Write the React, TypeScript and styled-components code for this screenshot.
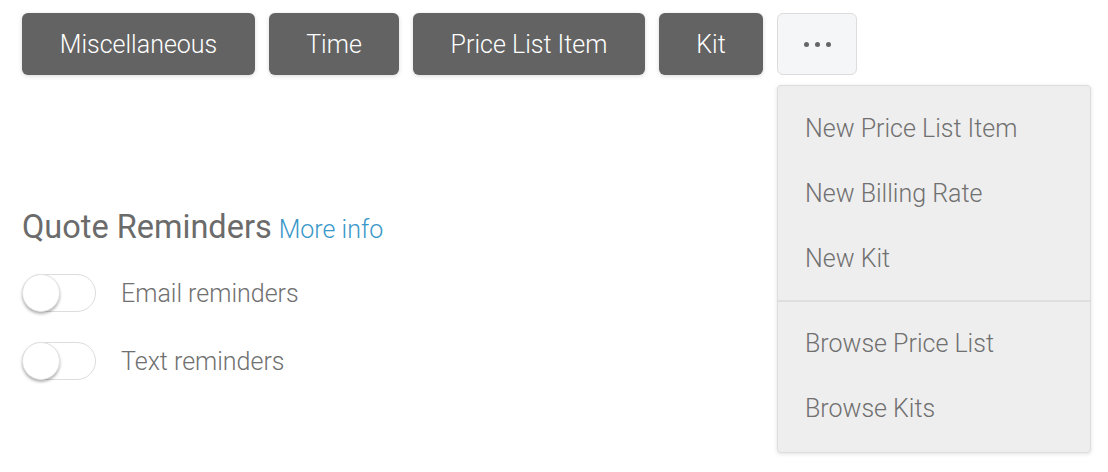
import React from "react";
import styled, { createGlobalStyle } from "styled-components";

const GlobalStyle = createGlobalStyle`
  body {
    margin: 0;
    background: #ffffff;
    font-family: Roboto, "Liberation Sans", sans-serif;
  }
`;

const Page = styled.div`
  padding: 13px 22px;
  width: 1108px;
  height: 472px;
  box-sizing: border-box;
`;

const Toolbar = styled.div`
  display: flex;
  gap: 14px;
  align-items: flex-start;
`;

const ActionButton = styled.button<{ $width: number }>`
  width: ${({ $width }) => $width}px;
  height: 62px;
  border: none;
  border-radius: 6px;
  background: #636363;
  color: #ffffff;
  font-family: Roboto, "Liberation Sans", sans-serif;
  font-size: 25px;
  font-weight: 300;
  box-shadow: 0 1px 4px rgba(0, 0, 0, 0.15);
  cursor: pointer;
`;

const MoreWrap = styled.div`
  position: relative;
`;

const MoreButton = styled.button`
  width: 80px;
  height: 62px;
  border: 1px solid #dcdcdc;
  border-radius: 6px;
  background: #f5f6f8;
  display: flex;
  align-items: center;
  justify-content: center;
  gap: 6px;
  cursor: pointer;
`;

const Dot = styled.span`
  width: 5px;
  height: 5px;
  border-radius: 50%;
  background: #666666;
`;

const Menu = styled.ul`
  position: absolute;
  top: 72px;
  left: 0;
  width: 314px;
  margin: 0;
  padding: 10px 0 11px;
  list-style: none;
  background: #eeeeee;
  border: 1px solid #dddddd;
  border-radius: 4px;
  box-shadow: 0 1px 4px rgba(0, 0, 0, 0.12);
  box-sizing: border-box;
`;

const MenuItem = styled.li`
  height: 65px;
  display: flex;
  align-items: center;
  padding-left: 27px;
  font-size: 25px;
  font-weight: 300;
  color: #707070;
`;

const Divider = styled.li`
  height: 2px;
  margin: 9px 0;
  background: #dedede;
`;

const Heading = styled.h2`
  margin: 135px 0 0;
  font-size: 32.5px;
  line-height: 34px;
  font-weight: 400;
  color: #6b6b6b;
`;

const InfoLink = styled.a`
  font-size: 25px;
  font-weight: 300;
  color: #3a97c9;
  text-decoration: none;
  margin-left: 7px;
`;

const Options = styled.div`
  margin-top: 27px;
  display: flex;
  flex-direction: column;
  gap: 30px;
`;

const OptionRow = styled.label`
  display: flex;
  align-items: center;
  gap: 25px;
`;

const Track = styled.span`
  position: relative;
  width: 74px;
  height: 38px;
  border: 1px solid #dddddd;
  border-radius: 19px;
  background: #ffffff;
  box-sizing: border-box;
`;

const Knob = styled.span`
  position: absolute;
  left: -1px;
  top: -1px;
  width: 38px;
  height: 38px;
  border-radius: 50%;
  background: #ffffff;
  border: 1px solid #e3e3e3;
  box-sizing: border-box;
  box-shadow: 0 2px 3px rgba(0, 0, 0, 0.3);
`;

const OptionLabel = styled.span`
  font-size: 25px;
  font-weight: 300;
  color: #707070;
`;

const buttons = [
  { label: "Miscellaneous", width: 233 },
  { label: "Time", width: 130 },
  { label: "Price List Item", width: 232 },
  { label: "Kit", width: 104 },
];

const App: React.FC = () => {
  return (
    <Page>
      <GlobalStyle />
      <Toolbar>
        {buttons.map((b) => (
          <ActionButton key={b.label} $width={b.width}>
            {b.label}
          </ActionButton>
        ))}
        <MoreWrap>
          <MoreButton aria-label="More">
            <Dot />
            <Dot />
            <Dot />
          </MoreButton>
          <Menu>
            <MenuItem>New Price List Item</MenuItem>
            <MenuItem>New Billing Rate</MenuItem>
            <MenuItem>New Kit</MenuItem>
            <Divider />
            <MenuItem>Browse Price List</MenuItem>
            <MenuItem>Browse Kits</MenuItem>
          </Menu>
        </MoreWrap>
      </Toolbar>
      <Heading>
        Quote Reminders<InfoLink href="#">More info</InfoLink>
      </Heading>
      <Options>
        <OptionRow>
          <Track>
            <Knob />
          </Track>
          <OptionLabel>Email reminders</OptionLabel>
        </OptionRow>
        <OptionRow>
          <Track>
            <Knob />
          </Track>
          <OptionLabel>Text reminders</OptionLabel>
        </OptionRow>
      </Options>
    </Page>
  );
};

export default App;
